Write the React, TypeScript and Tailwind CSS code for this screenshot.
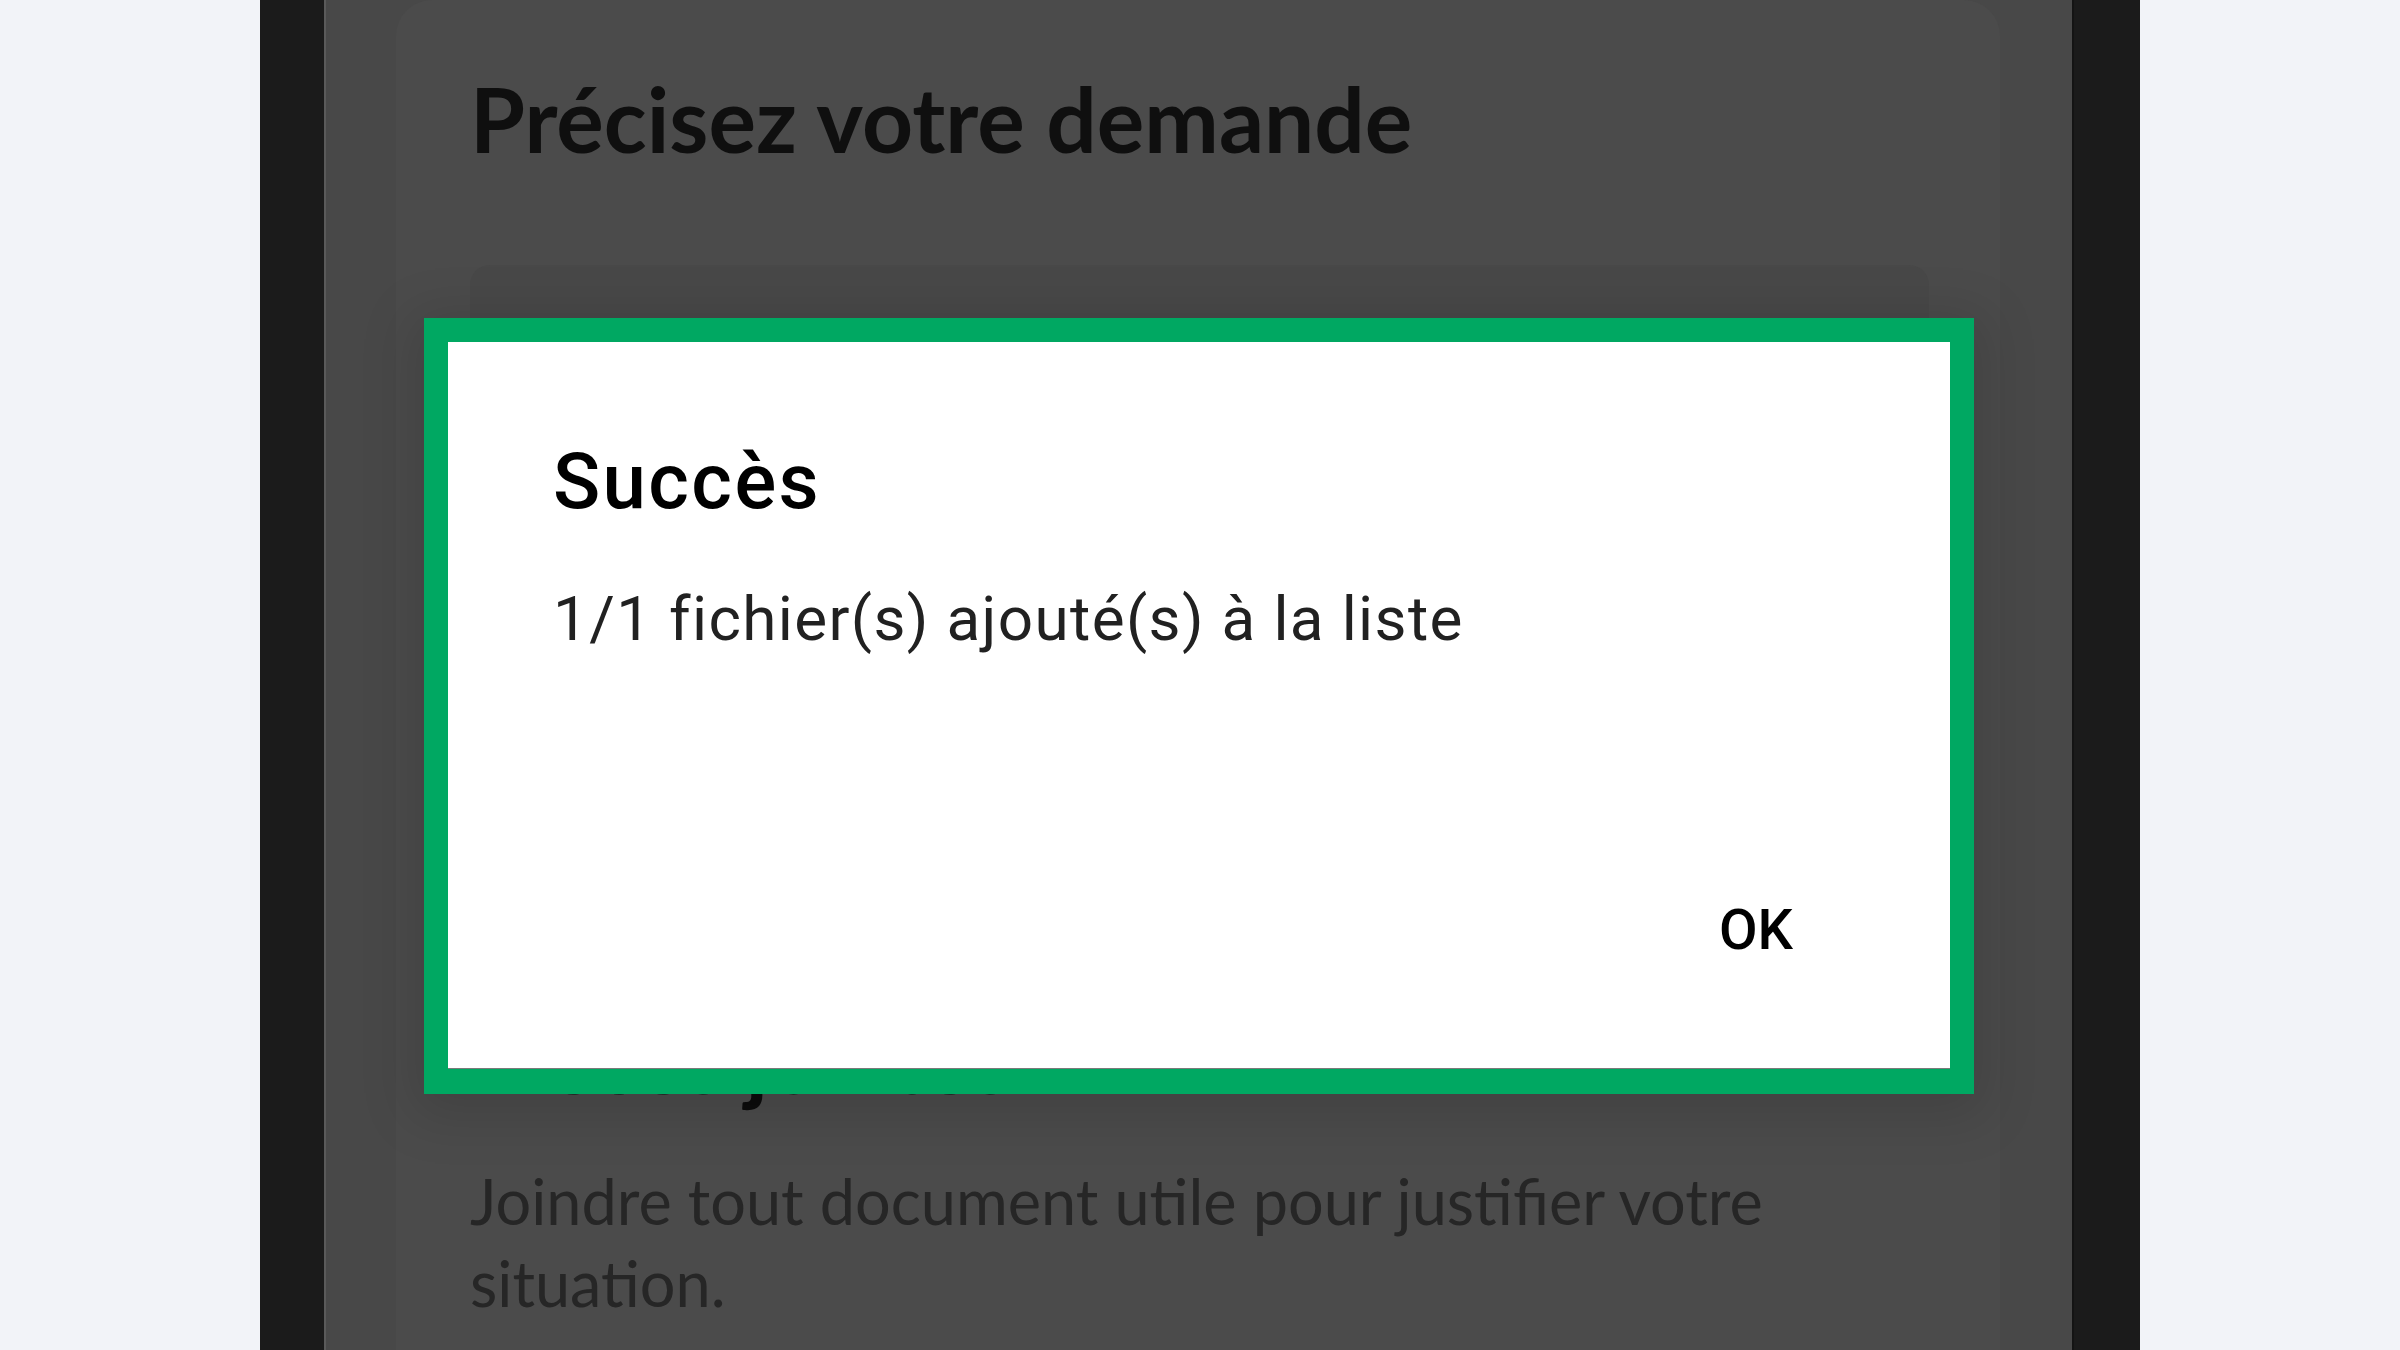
export default function App() {
  return (
    <div className="flex h-[1350px] w-[2400px] justify-center overflow-hidden bg-[#f2f3f8]">
      {/* phone bezel */}
      <div className="flex w-[1880px] bg-[#1b1b1b] pl-[64px] pr-[66px]">
        <div className="relative flex-1 border-l-2 border-r-2 border-l-[#5a5a5a] border-r-[#141414] bg-[#484848]">
          <div className="ml-[70px] mr-[72px] h-full rounded-t-[36px] bg-[#4b4b4b] pl-[74px] pr-[71px] pt-[74px] font-['Lato',sans-serif]">
            <h1 className="text-[89px] font-bold leading-none text-[#0f0f0f]">Précisez votre demande</h1>
            <div className="mt-[102px] h-[735px] rounded-[20px] bg-[#484848]" />
            <h2 className="mt-[15px] text-[89px] font-bold leading-none text-[#0c0c0c]">Pièces jointes</h2>
            <p className="mt-[56px] text-[63px] leading-[82px] text-[#262626]">
              Joindre tout document utile pour justifier votre situation.
            </p>
          </div>

          {/* success dialog */}
          <div className="absolute left-[98px] top-[318px] w-[1550px] border-[24px] border-b-[26px] border-[#00a862] shadow-[0_10px_50px_12px_rgba(0,0,0,0.13)]">
            <div className="flex h-[726px] flex-col bg-white pl-[105px] pt-[101px] font-['Roboto',sans-serif] shadow-[0_1px_0_#7a7a7a]">
              <div className="text-[78px] font-medium leading-none tracking-[0.03em] text-black">Succès</div>
              <div className="mt-[67px] text-[62px] leading-none tracking-[0.022em] text-[#212121]">
                1/1 fichier(s) ajouté(s) à la liste
              </div>
              <div className="mt-auto flex justify-end pb-[110px] pr-[157px]">
                <button className="text-[56px] font-medium leading-none text-black">OK</button>
              </div>
            </div>
          </div>
        </div>
      </div>
    </div>
  );
}
